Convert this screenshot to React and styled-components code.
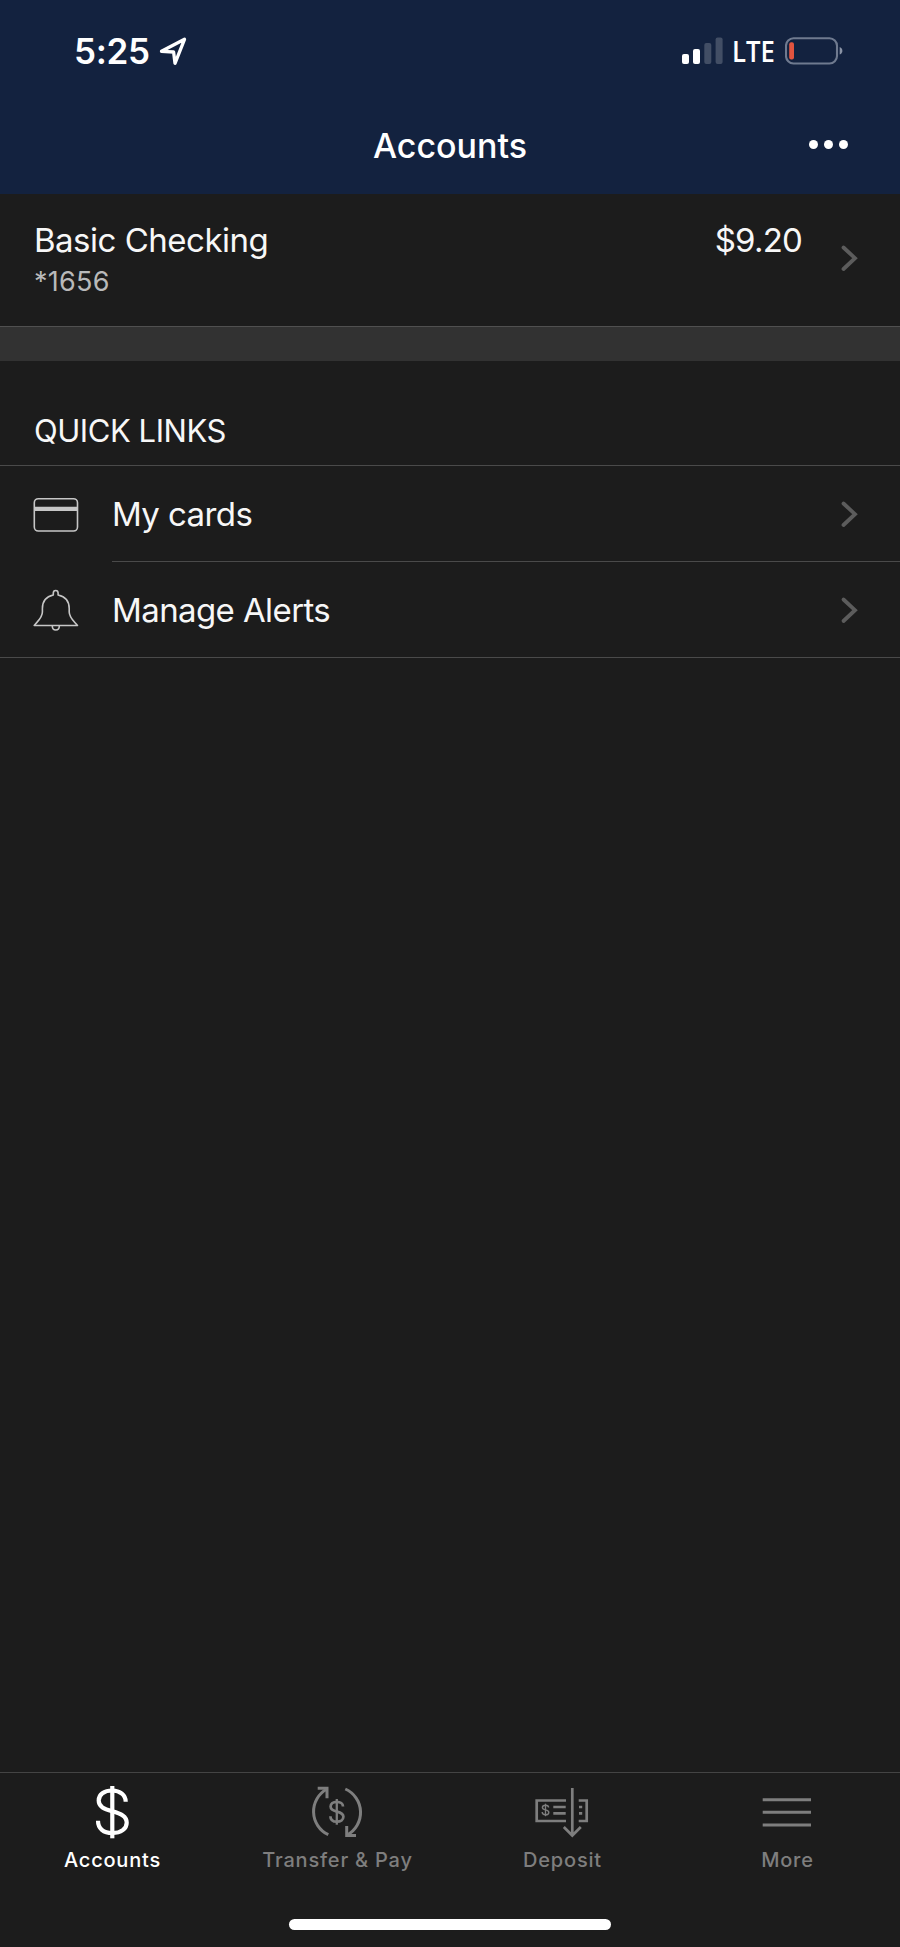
import React from "react";
import styled, { createGlobalStyle } from "styled-components";

const GlobalStyle = createGlobalStyle`
  * { box-sizing: border-box; }
  body { margin: 0; background: #1c1c1c; }
`;

// Page and top bar
const Screen = styled.div`
  display: flex; flex-direction: column; width: 900px; height: 1947px; overflow: hidden;
  background: #1c1c1c; color: #f7f7f7; font-family: Inter, "Liberation Sans", sans-serif;
`;
const TopBar = styled.header`height: 194px; background: #13223f; color: #fff;`;
const StatusBar = styled.div`
  display: flex; justify-content: space-between; height: 103px; padding: 30px 56px 0 74px;
`;
const StatusGroup = styled.div`display: flex; align-items: flex-start;`;
const Time = styled.div`width: 85px; font-size: 35px; font-weight: 600; line-height: 42px; letter-spacing: -0.3px;`;
const Network = styled.div`
  width: 52px; font-family: "Open Sans", sans-serif; font-size: 28.5px; font-weight: 600; line-height: 43px;
  transform: scaleX(0.9); transform-origin: left; text-indent: -1px;
`;
const NavBar = styled.div`
  display: grid; grid-template-columns: 1fr auto 1fr; align-items: start; padding: 22px 50px 0;
`;
const Title = styled.h1`
  grid-column: 2; margin: 0; font-size: 34px; font-weight: 500; line-height: 42px;
`;
const MoreButton = styled.button`
  justify-self: end; display: flex; gap: 6px; padding: 15px 2px 0 0; border: 0; background: none;
`;
const Dot = styled.span`width: 9px; height: 9px; border-radius: 50%; background: #fff;`;

// Account list
const AccountRow = styled.div`
  display: flex; height: 133px; padding: 26px 42px 0 34px; border-bottom: 1px solid #505050;
`;
const AccountInfo = styled.div`flex: 1;`;
const AccountName = styled.div`font-size: 33px; line-height: 40px; letter-spacing: -0.5px;`;
const AccountBalance = styled(AccountName)`letter-spacing: -0.8px;`;
const AccountNumber = styled.div`
  margin-top: 5px; font-size: 27px; line-height: 34px; letter-spacing: 0.25px; color: #b9b9b9;
`;
const AccountArrow = styled.div`display: flex; margin: 23px 0 0 36px;`;
const Band = styled.div`height: 34px; background: #323232;`;

// Quick links
const SectionTitle = styled.h2`
  height: 105px; margin: 0; padding: 50px 34px 0; border-bottom: 1px solid #4a4a4a;
  font-size: 31px; font-weight: 400; line-height: 40px; letter-spacing: -0.45px;
`;
const LinkList = styled.div`border-bottom: 1px solid #4a4a4a;`;
const LinkRow = styled.div`display: flex; height: 96px; padding-left: 33px; &:last-child { height: 95px; }`;
const LinkIcon = styled.div`display: flex; width: 79px; padding-top: 25px;`;
const LinkBody = styled.div`
  display: flex; flex: 1; align-items: center; justify-content: space-between; padding-right: 42px;
  ${LinkRow}:not(:last-child) & { border-bottom: 1px solid #4a4a4a; }
`;
const LinkText = styled.span`font-size: 33px; line-height: 40px; letter-spacing: -0.6px;`;

// Bottom tabs
const TabBar = styled.nav`
  display: grid; grid-template-columns: repeat(4, 1fr); grid-template-rows: 139px 1fr;
  height: 175px; margin-top: auto; padding-top: 7px; border-top: 1px solid #444;
`;
const Tab = styled.div`
  display: flex; flex-direction: column; align-items: center; color: ${(p) => (p.$active ? "#fff" : "#7e7e7e")};
`;
const TabLabel = styled.span`
  margin-top: 8px; font-size: 20px; font-weight: 500; line-height: 24px; letter-spacing: 0.8px;
`;
const HomeIndicator = styled.div`
  grid-column: 1 / -1; justify-self: center; width: 322px; height: 11px; border-radius: 6px; background: #fff;
`;

const Chevron = () => (
  <svg width="20" height="30" viewBox="0 0 20 30" fill="none">
    <path d="M5.500 4.500L17 15.200 5.500 26" stroke="#5c5c5c" strokeWidth="3.800" strokeLinecap="round" />
  </svg>
);

const LocationArrow = () => (
  <svg width="30" height="36" viewBox="0 0 30 36" fill="none">
    <path d="M2.500 21.300L25.500 9.300 16 33.300 14.600 22z" stroke="#fff" strokeWidth="3.300" strokeLinejoin="round" />
  </svg>
);

const Signal = () => (
  <svg width="51" height="36" viewBox="0 0 51 36" fill="#fff">
    <rect x="0" y="24" width="7" height="10" rx="2" />
    <rect x="11" y="19" width="7" height="15" rx="2" />
    <rect x="22.300" y="13" width="7" height="21" rx="2" opacity="0.2" />
    <rect x="33.600" y="7.500" width="7" height="26.500" rx="2" opacity="0.2" />
  </svg>
);

const Battery = () => (
  <svg width="59" height="36" viewBox="0 0 59 36" fill="none">
    <rect x="1" y="8.200" width="51" height="25.300" rx="7.500" stroke="#6f7a8f" strokeWidth="2.100" />
    <rect x="4.200" y="12.200" width="4.800" height="17.200" rx="2" fill="#e2543f" />
    <path d="M54.700 17c3.600 1.300 3.600 6.300 0 7.600z" fill="#8a93a5" />
  </svg>
);

const CardIcon = () => (
  <svg width="46" height="45" viewBox="0 0 46 45" fill="none" stroke="#c6c6c6">
    <rect x="1.300" y="7.700" width="43.200" height="32.300" rx="4" strokeWidth="1.600" />
    <path d="M1.300 17.800h43.200" strokeWidth="4.200" />
  </svg>
);

const BellIcon = () => (
  <svg width="46" height="45" viewBox="0 0 46 45" fill="none" stroke="#c6c6c6" strokeWidth="1.600" strokeLinejoin="round">
    <path d="M20.300 8V6c0-3.400 4.800-3.400 4.800 0v2C32 9.500 36.200 14.300 36.200 21.500v3.500c0 5.500 4 8.500 8.300 13.500H1.200C5.400 33.500 9.400 30.500 9.400 25v-3.500C9.400 14.300 13.500 9.500 20.300 8z" />
    <path d="M19.300 38.500v.5c0 5.300 7 5.300 7 0v-.5" />
  </svg>
);

const DollarIcon = () => (
  <svg width="61" height="60" viewBox="0 0 61 60" fill="none" stroke="currentColor" strokeWidth="4.200">
    <path d="M30.300 6v52.300" />
    <path d="M43.700 21.700C43.700 15 38 10.500 30.300 10.500 22 10.500 16.700 14.500 16.700 20.500c0 6.500 5.500 8.500 13.600 10.800 8.600 2.400 14.400 4.700 14.400 11.400 0 6-5.700 10.300-14.400 10.300-8.800 0-14.300-4.500-14.300-12.300" />
  </svg>
);

const TransferIcon = () => (
  <svg width="61" height="60" viewBox="0 0 61 60" fill="none" stroke="currentColor" strokeWidth="3">
    <path d="M21.300 54.700A25.600 25.600 0 0 1 20 9" />
    <path d="M10.700 8.300H20V18.300" />
    <path d="M38.300 9A25.600 25.600 0 0 1 40 55" />
    <path d="M39.700 46v9.500H49" />
    <path d="M29.800 19v25.700" strokeWidth="2.300" />
    <path d="M36 26.500c0-2.800-2.600-4.600-6.200-4.600-3.700 0-6.200 1.900-6.200 4.700 0 3.200 2.800 4.200 6.300 5 3.700.9 6.500 2 6.500 5.200 0 2.900-2.600 4.900-6.500 4.900-4 0-6.500-2.100-6.500-5.500" strokeWidth="2.700" />
  </svg>
);

const DepositIcon = () => (
  <svg width="61" height="60" viewBox="0 0 61 60" fill="none" stroke="currentColor" strokeWidth="2.700">
    <path d="M34 20.500H4.700V41H34M46.700 20.500H54.700V41H46.700" />
    <path d="M40.300 8v47.500M31.800 47l8.500 8.500 8.500-8.500" />
    <path d="M21.300 27h12.400M21.300 33.300h12.400M47 27h3.200M47 33.300h3.200" />
    <path d="M13.500 23.700v12.500" strokeWidth="1.300" />
    <path d="M16.600 27.500c0-1.400-1.300-2.200-3.100-2.200s-3.100.8-3.100 2.200c0 1.600 1.400 2 3.100 2.400 1.900.4 3.300.9 3.300 2.500 0 1.500-1.300 2.400-3.300 2.400s-3.300-1-3.300-2.700" strokeWidth="1.400" />
  </svg>
);

const MenuIcon = () => (
  <svg width="61" height="60" viewBox="0 0 61 60" fill="none" stroke="currentColor" strokeWidth="2.900">
    <path d="M5.700 19.700H54M5.700 32.300H54M5.700 45H54" />
  </svg>
);

const links = [
  { label: "My cards", icon: <CardIcon /> },
  { label: "Manage Alerts", icon: <BellIcon /> },
];

const tabs = [
  { label: "Accounts", icon: <DollarIcon />, active: true },
  { label: "Transfer & Pay", icon: <TransferIcon /> },
  { label: "Deposit", icon: <DepositIcon /> },
  { label: "More", icon: <MenuIcon /> },
];

const App = () => (
  <Screen>
    <GlobalStyle />
    <TopBar>
      <StatusBar>
        <StatusGroup>
          <Time>5:25</Time>
          <LocationArrow />
        </StatusGroup>
        <StatusGroup>
          <Signal />
          <Network>LTE</Network>
          <Battery />
        </StatusGroup>
      </StatusBar>
      <NavBar>
        <Title>Accounts</Title>
        <MoreButton aria-label="More options">
          <Dot />
          <Dot />
          <Dot />
        </MoreButton>
      </NavBar>
    </TopBar>

    <AccountRow>
      <AccountInfo>
        <AccountName>Basic Checking</AccountName>
        <AccountNumber>*1656</AccountNumber>
      </AccountInfo>
      <AccountBalance>$9.20</AccountBalance>
      <AccountArrow>
        <Chevron />
      </AccountArrow>
    </AccountRow>
    <Band />

    <SectionTitle>QUICK LINKS</SectionTitle>
    <LinkList>
      {links.map((link) => (
        <LinkRow key={link.label}>
          <LinkIcon>{link.icon}</LinkIcon>
          <LinkBody>
            <LinkText>{link.label}</LinkText>
            <Chevron />
          </LinkBody>
        </LinkRow>
      ))}
    </LinkList>

    <TabBar>
      {tabs.map((tab) => (
        <Tab key={tab.label} $active={tab.active}>
          {tab.icon}
          <TabLabel>{tab.label}</TabLabel>
        </Tab>
      ))}
      <HomeIndicator />
    </TabBar>
  </Screen>
);

export default App;
